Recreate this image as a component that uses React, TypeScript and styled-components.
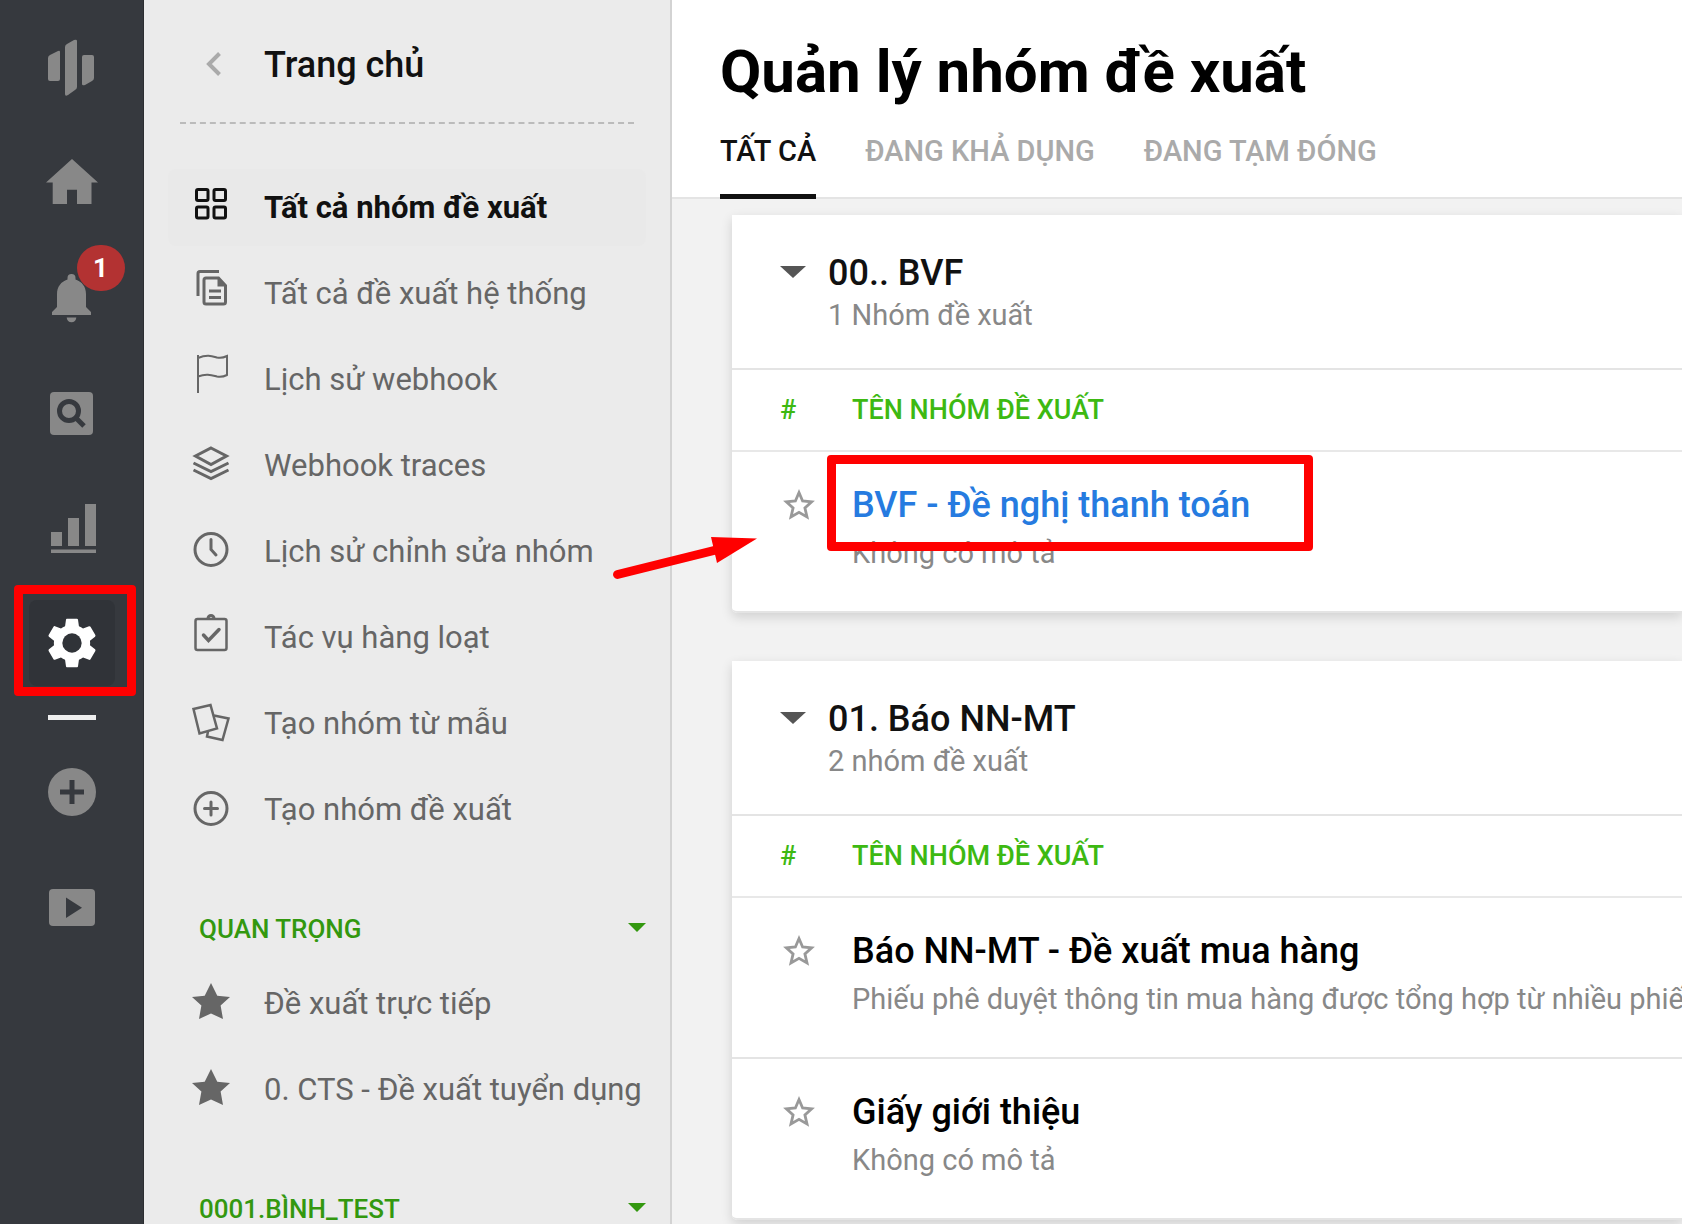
import React from "react";
import styled, { createGlobalStyle, css } from "styled-components";

const GlobalStyle = createGlobalStyle`
  *, *::before, *::after { box-sizing: border-box; }
  body {
    margin: 0;
    background: #f2f2f2;
    color: #111;
    font-family: Roboto, "Liberation Sans", sans-serif;
  }
  h1, h2, p, ul { margin: 0; padding: 0; }
  ul { list-style: none; }
  a { color: inherit; text-decoration: none; }
  button { margin: 0; padding: 0; border: 0; background: none; color: inherit; font: inherit; cursor: pointer; }
  svg { display: block; flex: none; overflow: visible; }
`;

/* ---------- Shell ---------- */

const Shell = styled.div`
  display: flex;
  height: 100vh;
  overflow: hidden;
`;

/* ---------- Rail ---------- */

const Rail = styled.nav`
  flex: none;
  display: flex;
  flex-direction: column;
  align-items: center;
  gap: 29px;
  width: 144px;
  padding-top: 25px;
  background: #36393e;
  border-right: 1px solid #2b2d31;
`;

const RailButton = styled.button<{ $active?: boolean }>`
  position: relative;
  display: flex;
  align-items: center;
  justify-content: center;
  flex: none;
  width: 86px;
  height: 86px;
  border-radius: 8px;
  color: #888;
  ${(p) => p.$active && css`
    background: #303338;
    color: #fff;
  `}
`;

const RailDivider = styled.div`
  flex: none;
  width: 48px;
  height: 5px;
  background: #eee;
`;

const Badge = styled.span`
  position: absolute;
  top: -10px;
  right: -10px;
  display: flex;
  align-items: center;
  justify-content: center;
  width: 48px;
  height: 46px;
  border-radius: 24px;
  background: #b33232;
  color: #fff;
  font-size: 26px;
  font-weight: 700;
`;

/* ---------- Red call-outs ---------- */

const Callout = styled.span`
  position: absolute;
  border: 9px solid #f00;
  border-radius: 4px;
  pointer-events: none;
`;

const SettingsCallout = styled(Callout)`
  inset: -15px -21px -10px -15px;
`;

const TitleCallout = styled(Callout)`
  top: 3px;
  left: -25px;
  width: 486px;
  height: 96px;
`;

const Arrow = styled.svg`
  position: absolute;
  top: 84px;
  left: -240px;
  pointer-events: none;
`;

/* ---------- Sidebar ---------- */

const Sidebar = styled.aside`
  flex: none;
  width: 528px;
  overflow: hidden;
  background: #ebebeb;
  border-right: 2px solid #d3d3d3;
`;

const SidebarHead = styled.a`
  display: flex;
  align-items: center;
  gap: 43px;
  margin: 0 36px 45px;
  padding: 43px 0 35px 26px;
  border-bottom: 2px dashed #bbb;
  font-size: 36px;
  font-weight: 500;
  line-height: 44px;
`;

const NavList = styled.ul`
  display: flex;
  flex-direction: column;
  gap: 9px;
  padding: 0 24px;
`;

const NavLink = styled.a<{ $active?: boolean }>`
  display: flex;
  align-items: center;
  gap: 34px;
  height: 77px;
  padding-left: 24px;
  border-radius: 8px;
  color: #666;
  font-size: 31px;
  line-height: 44px;
  white-space: nowrap;
  svg { margin-bottom: 5px; }
  ${(p) => p.$active && css`
    background: #e9e9e9;
    color: #111;
    font-weight: 700;
  `}
`;

const NavGroupToggle = styled.button`
  display: flex;
  align-items: center;
  justify-content: space-between;
  width: 100%;
  margin-top: 66px;
  margin-bottom: 21px;
  padding: 0 24px 0 55px;
  color: #33980f;
  font-size: 26px;
  font-weight: 500;
  line-height: 30px;
  svg { margin-bottom: 4px; }
`;

/* ---------- Main ---------- */

const Main = styled.main`
  flex: 1;
  min-width: 0;
`;

const PageHead = styled.header`
  padding: 38px 48px 0;
  background: #fff;
  border-bottom: 2px solid #e4e4e4;
`;

const PageTitle = styled.h1`
  color: #000;
  font-size: 60px;
  font-weight: 700;
  line-height: 68px;
  white-space: nowrap;
`;

const Tabs = styled.div`
  display: flex;
  gap: 49px;
  margin-top: 27px;
  margin-bottom: -2px;
`;

const Tab = styled.a<{ $active?: boolean }>`
  padding-bottom: 25px;
  border-bottom: 5px solid ${(p) => (p.$active ? "#111" : "transparent")};
  color: ${(p) => (p.$active ? "#111" : "#aaa")};
  font-size: 29px;
  font-weight: 500;
  line-height: 36px;
  white-space: nowrap;
`;

const Groups = styled.div`
  display: flex;
  flex-direction: column;
  gap: 48px;
  padding: 16px 0 0 60px;
`;

const Card = styled.section`
  border-radius: 0 0 0 5px;
  background: #fff;
  box-shadow: 0 4px 12px rgba(0, 0, 0, 0.14);
`;

const CardHead = styled.header`
  display: flex;
  align-items: flex-start;
  gap: 22px;
  padding: 37px 48px 32px;
  border-bottom: 2px solid #e4e4e4;
`;

const CaretButton = styled.button`
  display: flex;
  align-items: center;
  height: 40px;
  color: #555;
`;

const GroupTitle = styled.h2`
  font-size: 36px;
  font-weight: 500;
  line-height: 42px;
`;

const GroupCount = styled.p`
  color: #888;
  font-size: 29px;
  line-height: 42px;
`;

const Table = styled.table`
  width: 100%;
  table-layout: fixed;
  border-collapse: separate;
  border-spacing: 0;
`;

const HeadCell = styled.th`
  height: 82px;
  padding: 0;
  border-bottom: 2px solid #e8e8e8;
  color: #3db912;
  font-size: 27px;
  font-weight: 500;
  line-height: 30px;
  text-align: left;
  &:first-child { width: 120px; padding-left: 48px; }
`;

const Cell = styled.td`
  position: relative;
  padding: 29px 0 34px;
  border-bottom: 2px solid #e4e4e4;
  vertical-align: top;
  white-space: nowrap;
  &:first-child { padding-left: 51px; }
  tr:last-child > &:first-child { border-bottom-left-radius: 5px; }
`;

const StarButton = styled.button`
  display: flex;
  align-items: center;
  height: 48px;
  color: #999;
`;

const ItemLink = styled.a<{ $highlight?: boolean }>`
  display: block;
  color: ${(p) => (p.$highlight ? "#267be0" : "#000")};
  font-size: 36px;
  font-weight: 500;
  line-height: 48px;
`;

const ItemText = styled.p`
  color: #888;
  font-size: 29px;
  line-height: 48px;
`;

/* ---------- Rail icons ---------- */

const LogoIcon = () => (
  <svg width="50" height="56" viewBox="0 0 50 56" fill="currentColor">
    <path d="M1 18q0-2 2-3l8-4q2-1 2 1v27q0 2-2 2H3q-2 0-2-2z" />
    <path d="M18 7q0-2 2-3l7-4q3-1 3 1v46q0 2-2 3l-7 5q-3 2-3-1z" />
    <path d="M35 17q0-2 2-2h8q2 0 2 2v21q0 2-2 3l-7 4q-3 1-3-1z" />
  </svg>
);

const HomeIcon = () => (
  <svg width="52" height="48" viewBox="0 0 52 48" fill="currentColor">
    <path d="M26 0 52 23.500h-6.500V45H31V30.700H21V45H6.700V23.500H0z" />
  </svg>
);

const BellIcon = () => (
  <svg width="39" height="48" viewBox="0 0 39 48" fill="currentColor">
    <path d="M15.500 5.500V4a4 4 0 0 1 8 0v1.500C30 7.500 34 13 34 20v13l5 5v3H0v-3l5-5V20C5 13 9 7.500 15.500 5.500z" />
    <path d="M14.700 43.500h9.600a4.800 4.800 0 0 1-9.600 0z" />
  </svg>
);

const SearchIcon = () => (
  <svg width="43" height="43" viewBox="0 0 43 43">
    <rect width="43" height="43" rx="4" fill="currentColor" />
    <circle cx="19" cy="19" r="9.500" fill="none" stroke="#36393e" strokeWidth="5" />
    <path d="m25.500 25.500 8.500 8.500" stroke="#36393e" strokeWidth="5" />
  </svg>
);

const ChartIcon = () => (
  <svg width="48" height="49" viewBox="-3 0 48 49" fill="currentColor">
    <path d="M0 28h11v14H0zM17 14h11v28H17zM34 0h11v42H34zM0 45.500h45V49H0z" />
  </svg>
);

const GearIcon = () => (
  <svg width="58" height="58" viewBox="0 0 24 24">
    <path
      fill="currentColor"
      d="M19.430 12.980c.04-.32.07-.64.07-.98s-.03-.66-.07-.98l2.110-1.650c.19-.15.24-.42.12-.64l-2-3.460c-.12-.22-.39-.3-.61-.22l-2.490 1c-.52-.4-1.080-.73-1.690-.98l-.38-2.650A.488.488 0 0 0 14 2h-4c-.25 0-.46.18-.49.42l-.38 2.650c-.61.25-1.170.59-1.690.98l-2.490-1c-.23-.09-.49 0-.61.22l-2 3.460c-.13.22-.07.49.12.64l2.110 1.650c-.04.32-.07.65-.07.98s.03.66.07.98l-2.110 1.650c-.19.15-.24.42-.12.64l2 3.460c.12.22.39.3.61.22l2.490-1c.52.4 1.080.73 1.690.98l.38 2.650c.03.24.24.42.49.42h4c.25 0 .46-.18.49-.42l.38-2.650c.61-.25 1.170-.59 1.690-.98l2.490 1c.23.09.49 0 .61-.22l2-3.460c.12-.22.07-.49-.12-.64z"
    />
    <circle cx="12" cy="12" r="4" fill="#303338" />
  </svg>
);

const PlusIcon = () => (
  <svg width="48" height="48" viewBox="0 0 48 48">
    <circle cx="24" cy="24" r="24" fill="currentColor" />
    <path d="M24 12v24M12 24h24" stroke="#36393e" strokeWidth="5" />
  </svg>
);

const PlayIcon = () => (
  <svg width="46" height="37" viewBox="0 0 46 37">
    <rect width="46" height="37" rx="4" fill="currentColor" />
    <path d="M17 8.500v20.500l16-10.300z" fill="#36393e" />
  </svg>
);

/* ---------- Sidebar icons ---------- */

const LineIcon = ({ width = 3, children }: { width?: number; children: React.ReactNode }) => (
  <svg width="38" height="38" viewBox="0 0 38 38" fill="none" stroke="currentColor" strokeWidth={width}>
    {children}
  </svg>
);

const ChevronLeft = () => (
  <svg width="15" height="26" viewBox="0 0 15 26" fill="none" stroke="#aaa" strokeWidth="4">
    <path d="M13.500 1.500 3 12l10.500 10.500" />
  </svg>
);

const GridIcon = () => (
  <LineIcon>
    <rect x="4.500" y="3.500" width="11.500" height="11" rx="1.500" />
    <rect x="22" y="3.500" width="11.500" height="11" rx="1.500" />
    <rect x="4.500" y="21" width="11.500" height="11" rx="1.500" />
    <rect x="22" y="21" width="11.500" height="11" rx="1.500" />
  </LineIcon>
);

const DocsIcon = () => (
  <LineIcon>
    <path d="M6 24V1.500Q6-.5 8-.5h19" />
    <path d="M14 6h12.500l7 7.500V30q0 2-2 2H14q-2 0-2-2V8q0-2 2-2z" />
    <path d="M25.500 5v9.500H35z" fill="currentColor" stroke="none" />
    <path d="M17 19h12M17 25.500h12" />
  </LineIcon>
);

const FlagIcon = () => (
  <LineIcon width={2}>
    <path d="M6-3v38M6 0c9-4 14-2 19-.5 4 1 7 0 10-1.500v19c-4 2-7 2-10 1.500-6-1.500-11-3-19 0" />
  </LineIcon>
);

const LayersIcon = () => (
  <LineIcon>
    <path d="M19 4 34.500 12 19 20.500 3.500 12z" />
    <path d="m1.500 19 17.500 8.500L36.500 19M1.500 26 19 34.500 36.500 26" />
  </LineIcon>
);

const ClockIcon = () => (
  <LineIcon>
    <circle cx="19" cy="19.500" r="16" />
    <path d="M19 9.500v10l5 5.500" strokeLinecap="round" />
  </LineIcon>
);

const ClipboardIcon = () => (
  <LineIcon width={2.5}>
    <rect x="3.500" y="3" width="31" height="31" rx="2" />
    <path d="M16 2.500a3 3 0 0 1 6 0" strokeWidth="3" />
    <path d="m11.500 19 5 5.500 10.500-11" strokeWidth="3.500" strokeLinecap="round" />
  </LineIcon>
);

const SheetsIcon = () => (
  <LineIcon width={2.5}>
    <path d="M1.500 7 18.500 3 25 26.500 7.500 31.500z" />
    <path d="m22 13.500 14.500 3-6 21.500-15.500-3.500 1-5" />
  </LineIcon>
);

const AddIcon = () => (
  <LineIcon>
    <circle cx="19" cy="20.500" r="16" />
    <path d="M19 14v13M12.500 20.500h13" strokeLinecap="round" />
  </LineIcon>
);

const SolidStar = () => (
  <svg width="38" height="38" viewBox="0 0 38 38" fill="currentColor">
    <path d="m19 1 6.300 12.700L38 15l-9.400 8.500L31 37l-12-5.500L7 37l2.400-13.500L0 15l12.700-1.300z" />
  </svg>
);

const StarOutline = () => (
  <svg width="32" height="32" viewBox="0 0 32 32" fill="none" stroke="currentColor" strokeWidth="2.800">
    <path d="m16 3.500 3.600 8.500 9 .8-6.700 6.100 2.100 9L16 23.300l-8 4.600 2.100-9-6.700-6.100 9-.8z" />
  </svg>
);

const GroupCaret = () => (
  <svg width="26" height="12" viewBox="0 0 26 12" fill="currentColor">
    <path d="M0 0h26L13 12z" />
  </svg>
);

const NavCaret = () => (
  <svg width="18" height="9" viewBox="0 0 18 9" fill="currentColor">
    <path d="M0 0h18L9 9z" />
  </svg>
);

/* ---------- Data ---------- */

const navItems = [
  { label: "Tất cả nhóm đề xuất", Icon: GridIcon, active: true },
  { label: "Tất cả đề xuất hệ thống", Icon: DocsIcon },
  { label: "Lịch sử webhook", Icon: FlagIcon },
  { label: "Webhook traces", Icon: LayersIcon },
  { label: "Lịch sử chỉnh sửa nhóm", Icon: ClockIcon },
  { label: "Tác vụ hàng loạt", Icon: ClipboardIcon },
  { label: "Tạo nhóm từ mẫu", Icon: SheetsIcon },
  { label: "Tạo nhóm đề xuất", Icon: AddIcon },
];

const starred = ["Đề xuất trực tiếp", "0. CTS - Đề xuất tuyển dụng"];

const groups = [
  {
    title: "00.. BVF",
    count: "1 Nhóm đề xuất",
    items: [{ name: "BVF - Đề nghị thanh toán", text: "Không có mô tả", highlight: true }],
  },
  {
    title: "01. Báo NN-MT",
    count: "2 nhóm đề xuất",
    items: [
      {
        name: "Báo NN-MT - Đề xuất mua hàng",
        text: "Phiếu phê duyệt thông tin mua hàng được tổng hợp từ nhiều phiếu",
        highlight: false,
      },
      { name: "Giấy giới thiệu", text: "Không có mô tả", highlight: false },
    ],
  },
];

export default function App() {
  return (
    <>
      <GlobalStyle />
      <Shell>
        <Rail>
          <RailButton aria-label="Base"><LogoIcon /></RailButton>
          <RailButton aria-label="Trang chủ"><HomeIcon /></RailButton>
          <RailButton aria-label="Thông báo">
            <BellIcon />
            <Badge>1</Badge>
          </RailButton>
          <RailButton aria-label="Tìm kiếm"><SearchIcon /></RailButton>
          <RailButton aria-label="Báo cáo"><ChartIcon /></RailButton>
          <RailButton aria-label="Cài đặt" $active>
            <GearIcon />
            <SettingsCallout />
          </RailButton>
          <RailDivider />
          <RailButton aria-label="Tạo mới"><PlusIcon /></RailButton>
          <RailButton aria-label="Video"><PlayIcon /></RailButton>
        </Rail>

        <Sidebar>
          <SidebarHead href="#">
            <ChevronLeft />
            Trang chủ
          </SidebarHead>
          <NavList>
            {navItems.map(({ label, Icon, active }) => (
              <li key={label}>
                <NavLink href="#" $active={active}>
                  <Icon />
                  {label}
                </NavLink>
              </li>
            ))}
          </NavList>
          <NavGroupToggle>
            QUAN TRỌNG
            <NavCaret />
          </NavGroupToggle>
          <NavList>
            {starred.map((label) => (
              <li key={label}>
                <NavLink href="#">
                  <SolidStar />
                  {label}
                </NavLink>
              </li>
            ))}
          </NavList>
          <NavGroupToggle>
            0001.BÌNH_TEST
            <NavCaret />
          </NavGroupToggle>
        </Sidebar>

        <Main>
          <PageHead>
            <PageTitle>Quản lý nhóm đề xuất</PageTitle>
            <Tabs>
              <Tab href="#" $active>TẤT CẢ</Tab>
              <Tab href="#">ĐANG KHẢ DỤNG</Tab>
              <Tab href="#">ĐANG TẠM ĐÓNG</Tab>
            </Tabs>
          </PageHead>
          <Groups>
            {groups.map((group) => (
              <Card key={group.title}>
                <CardHead>
                  <CaretButton aria-label={group.title}><GroupCaret /></CaretButton>
                  <div>
                    <GroupTitle>{group.title}</GroupTitle>
                    <GroupCount>{group.count}</GroupCount>
                  </div>
                </CardHead>
                <Table>
                  <thead>
                    <tr>
                      <HeadCell>#</HeadCell>
                      <HeadCell>TÊN NHÓM ĐỀ XUẤT</HeadCell>
                    </tr>
                  </thead>
                  <tbody>
                    {group.items.map((item) => (
                      <tr key={item.name}>
                        <Cell>
                          <StarButton aria-label={item.name}><StarOutline /></StarButton>
                        </Cell>
                        <Cell>
                          <ItemLink href="#" $highlight={item.highlight}>{item.name}</ItemLink>
                          <ItemText>{item.text}</ItemText>
                          {item.highlight && (
                            <>
                              <TitleCallout />
                              <Arrow width="146" height="46" viewBox="0 0 146 46" fill="#f00">
                                <path d="M5.500 38.500 104 14" stroke="#f00" strokeWidth="9" strokeLinecap="round" />
                                <path d="M99 1 145 2.500 105 27z" />
                              </Arrow>
                            </>
                          )}
                        </Cell>
                      </tr>
                    ))}
                  </tbody>
                </Table>
              </Card>
            ))}
          </Groups>
        </Main>
      </Shell>
    </>
  );
}
